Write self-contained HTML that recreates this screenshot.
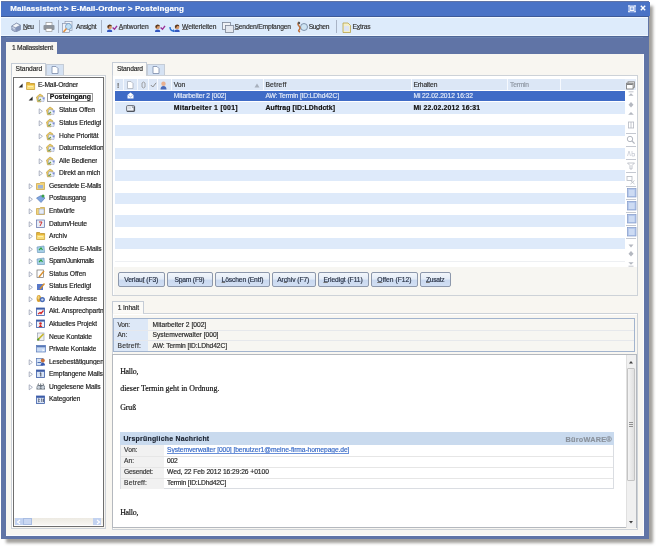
<!DOCTYPE html>
<html><head><meta charset="utf-8">
<style>
*{margin:0;padding:0;box-sizing:border-box}
html,body{width:658px;height:548px;overflow:hidden;background:#fff;font-family:"Liberation Sans",sans-serif;font-size:6.45px;color:#222;position:relative}
.a{position:absolute;display:block}
u{text-decoration-thickness:0.5px;text-underline-offset:0.4px;text-decoration-color:#777}
.t{position:absolute;white-space:nowrap;line-height:1;-webkit-text-stroke:0.18px currentColor}
#w{position:absolute;left:0;top:0;width:658px;height:548px;will-change:transform}
</style></head><body><div id="w">
<div class="a" style="left:6px;top:5.5px;width:647px;height:537.8px;background:rgba(70,66,58,.5);filter:blur(1.6px)"></div>
<div class="a" style="left:1px;top:1px;width:648.4px;height:538.3px;background:#6074A6;"></div>
<div class="a" style="left:1px;top:1.5px;width:648.5px;height:14.2px;background:#4A73C6;"></div>
<div class="t" style="left:10.2px;top:5.13px;font-size:8.0px;font-weight:bold;color:#FFFFFF;letter-spacing:0.105px;">Mailassistent &gt; E-Mail-Ordner &gt; Posteingang</div>
<svg class="a" style="left:627.5px;top:5px;" width="8" height="7.5" viewBox="0 0 8 7.5"><rect x="0" y="0" width="8" height="7.5" rx="1" fill="#93ADE4"/><rect x="2.2" y="2" width="3.6" height="3.5" fill="none" stroke="#fff" stroke-width=".9"/><rect x=".3" y=".3" width="1.3" height="1.3" fill="#fff"/><rect x="6.4" y=".3" width="1.3" height="1.3" fill="#fff"/><rect x=".3" y="5.9" width="1.3" height="1.3" fill="#fff"/><rect x="6.4" y="5.9" width="1.3" height="1.3" fill="#fff"/></svg>
<svg class="a" style="left:639.5px;top:5.3px;" width="6" height="6" viewBox="0 0 6 6"><path d="M.8 .8L5.2 5.2M5.2 .8L.8 5.2" stroke="#fff" stroke-width="1.4"/></svg>
<div class="a" style="left:1px;top:15.5px;width:648px;height:1px;background:#3E5A98;"></div>
<div class="a" style="left:1px;top:16.5px;width:647px;height:19px;background:#DDEBFB;"></div>
<div class="a" style="left:1px;top:16.5px;width:647px;height:1px;background:#F4FAFF;"></div>
<div class="a" style="left:1px;top:34.5px;width:647px;height:1px;background:#F0F7FF;"></div>
<div class="a" style="left:1px;top:35.5px;width:648px;height:1px;background:#4E6696;"></div>
<div class="a" style="left:39.4px;top:19.5px;width:1px;height:13px;background:#A9B4C6;"></div>
<div class="a" style="left:58.2px;top:19.5px;width:1px;height:13px;background:#A9B4C6;"></div>
<div class="a" style="left:101.4px;top:19.5px;width:1px;height:13px;background:#A9B4C6;"></div>
<div class="a" style="left:336px;top:19.5px;width:1px;height:13px;background:#A9B4C6;"></div>
<svg class="a" style="left:10.5px;top:21.8px;" width="10" height="10.5" viewBox="0 0 10 10.5"><path d="M.8 4L5.5 1.2L9.4 3.2L9.4 7.8L4.6 10L.8 8Z" fill="#A8B4D0" stroke="#6A7898" stroke-width=".6"/><path d="M.8 4L5.5 1.2L9.4 3.2L4.6 5.8Z" fill="#F2F5FA" stroke="#6A7898" stroke-width=".5"/><path d="M4.6 5.8L4.6 10L9.4 7.8L9.4 3.2Z" fill="#8494B8"/><path d="M1.5 5.5L3.8 6.8" stroke="#E8F0FA" stroke-width=".8"/></svg>
<svg class="a" style="left:43px;top:21.5px;" width="12" height="10" viewBox="0 0 12 10"><rect x="3" y="0.5" width="6" height="3" fill="#fff" stroke="#888" stroke-width=".6"/><rect x="0.5" y="3" width="11" height="5" rx="1" fill="#8E949C"/><rect x="3" y="6.5" width="6" height="3" fill="#fff" stroke="#888" stroke-width=".6"/></svg>
<svg class="a" style="left:62px;top:20.5px;" width="12" height="12" viewBox="0 0 12 12"><rect x="3" y="0.5" width="7" height="9" fill="#F4F6FA" stroke="#8B97B0" stroke-width=".7"/><rect x="0.5" y="2.5" width="7" height="9" fill="#EEF2F8" stroke="#8B97B0" stroke-width=".7"/><circle cx="6.5" cy="5.5" r="3" fill="#BFE0F4" stroke="#6F93BF" stroke-width=".8"/><path d="M4.5 7.5L1.5 11" stroke="#E09040" stroke-width="1.6"/></svg>
<svg class="a" style="left:106.8px;top:23.5px;" width="11" height="8" viewBox="0 0 11 8"><circle cx="2.6" cy="3" r="2.3" fill="#D89A6A"/><path d="M0.3 3Q0.3 .5 2.6 .5Q4.9 .5 4.9 2.2L2.6 2L1.3 4.5Z" fill="#5A3A20"/><path d="M0 8Q0 5.6 2.6 5.6Q5.2 5.6 5.2 8Z" fill="#3558C0"/><path d="M5.6 3.5L7.5 5.3L10 1.8" stroke="#9A3098" stroke-width="1.4" fill="none"/></svg>
<svg class="a" style="left:155.3px;top:23.5px;" width="11" height="8" viewBox="0 0 11 8"><circle cx="2.6" cy="3" r="2.3" fill="#D89A6A"/><path d="M0.3 3Q0.3 .5 2.6 .5Q4.9 .5 4.9 2.2L2.6 2L1.3 4.5Z" fill="#5A3A20"/><path d="M0 8Q0 5.6 2.6 5.6Q5.2 5.6 5.2 8Z" fill="#3558C0"/><path d="M5.6 3.5L7.5 5.3L10 1.8" stroke="#9A3098" stroke-width="1.4" fill="none"/></svg>
<svg class="a" style="left:169px;top:23.5px;" width="12" height="8" viewBox="0 0 12 8"><path d="M1 3Q1 7 5 7" stroke="#2E6FD0" stroke-width="1.4" fill="none"/><path d="M4 5L6 7L4 9" fill="#2E6FD0"/><circle cx="8.1" cy="3" r="2.3" fill="#D89A6A"/><path d="M5.8 3Q5.8 .5 8.1 .5Q10.4 .5 10.4 2.2L8.1 2L6.8 4.5Z" fill="#5A3A20"/><path d="M5.5 8Q5.5 5.6 8.1 5.6Q10.7 5.6 10.7 8Z" fill="#3558C0"/></svg>
<svg class="a" style="left:222px;top:21.5px;" width="12" height="11" viewBox="0 0 12 11"><rect x="0.5" y="0.5" width="8" height="7" fill="#F0F2F6" stroke="#7D8596" stroke-width=".8"/><rect x="3.5" y="3.5" width="8" height="7" fill="#E4E8EF" stroke="#7D8596" stroke-width=".8"/></svg>
<svg class="a" style="left:296.5px;top:20.5px;" width="12" height="12" viewBox="0 0 12 12"><circle cx="7" cy="6" r="3.5" fill="#CDE3F2" stroke="#6C7F9A" stroke-width=".8"/><path d="M2 1Q0 3 2 5Q4 7 2 9Q1 10 3 11" stroke="#C0703A" stroke-width="1.5" fill="none"/><circle cx="2" cy="2" r="1.2" fill="#555"/></svg>
<svg class="a" style="left:341.5px;top:21.5px;" width="9" height="11" viewBox="0 0 9 11"><path d="M1 1L6 1L8.5 3.5L8.5 10.5L1 10.5Z" fill="#F4EFC8" stroke="#B8A24A" stroke-width=".8"/><rect x="2" y="4" width="5" height="5" fill="#DDE4F4"/></svg>
<div class="t" style="left:22.9px;top:24.43px;font-size:6.7px;color:#333;letter-spacing:-0.591px;"><u>N</u>eu</div>
<div class="t" style="left:76px;top:24.43px;font-size:6.7px;color:#333;letter-spacing:-0.240px;">Ansi<u>c</u>ht</div>
<div class="t" style="left:118.7px;top:24.43px;font-size:6.7px;color:#333;letter-spacing:-0.003px;"><u>A</u>ntworten</div>
<div class="t" style="left:182px;top:24.43px;font-size:6.7px;color:#333;letter-spacing:-0.064px;"><u>W</u>eiterleiten</div>
<div class="t" style="left:234.5px;top:24.43px;font-size:6.7px;color:#333;letter-spacing:-0.175px;"><u>S</u>enden/Empfangen</div>
<div class="t" style="left:308.7px;top:24.43px;font-size:6.7px;color:#333;letter-spacing:-0.398px;">Su<u>c</u>hen</div>
<div class="t" style="left:352.5px;top:24.43px;font-size:6.7px;color:#333;letter-spacing:-0.151px;">E<u>x</u>tras</div>
<div class="a" style="left:6px;top:36.5px;width:637px;height:1px;background:#6A82B0;"></div>
<div class="a" style="left:6px;top:42px;width:51px;height:12.5px;background:#F8F6F1;"></div>
<div class="t" style="left:12px;top:45.33px;font-size:6.7px;color:#2A2A2A;letter-spacing:-0.231px;">1 Mailassistent</div>
<div class="a" style="left:6px;top:54px;width:637.6px;height:481.7px;background:#F8F6F1;box-shadow:inset -1px -1px 0 #FCFDFF"></div>
<div class="a" style="left:11px;top:62.5px;width:34.5px;height:13px;background:#FBFAF7;border:1px solid #C5CCD6;border-bottom:none"></div>
<div class="t" style="left:15.6px;top:65.93px;font-size:6.7px;color:#2A2A2A;letter-spacing:-0.079px;">Standard</div>
<div class="a" style="left:45.5px;top:64px;width:18.5px;height:11.5px;background:#D5E2F3;border:1px solid #C5CCD6;border-bottom:none"></div>
<svg class="a" style="left:50.5px;top:66px;" width="8" height="8" viewBox="0 0 8 8"><path d="M1 .5L5 .5L7 2.5L7 7.5L1 7.5Z" fill="#fff" stroke="#7A8AA8" stroke-width=".8"/></svg>
<div class="a" style="left:11px;top:74.5px;width:94.6px;height:454.8px;background:#F7F5F0;border:1px solid #CDD2D8;box-shadow:inset 1px 1px 0 #fff"></div>
<div class="a" style="left:12px;top:74.3px;width:32.5px;height:1.4px;background:#FBFAF7;"></div>
<div class="a" style="left:13px;top:76.5px;width:90.5px;height:450.5px;background:#FFFFFF;border:1px solid #6E6E6E"></div>
<div class="a" style="left:14px;top:517.8px;width:88.5px;height:7.4px;background:linear-gradient(#EDEAE2,#F8F6F2);"></div>
<div class="a" style="left:14.5px;top:517.8px;width:8px;height:7.2px;background:#C2D2F0;"></div>
<div class="a" style="left:22.5px;top:518.2px;width:9.2px;height:6.8px;background:#C9D7F2;border:1px solid #A9BDE2"></div>
<div class="a" style="left:93.2px;top:517.8px;width:8px;height:7.2px;background:#C2D2F0;"></div>
<svg class="a" style="left:15.5px;top:518.5px;" width="6" height="6" viewBox="0 0 6 6"><path d="M4 1L1.5 3L4 5" stroke="#fff" stroke-width="1.2" fill="none"/></svg>
<svg class="a" style="left:94.5px;top:518.5px;" width="6" height="6" viewBox="0 0 6 6"><path d="M2 1L4.5 3L2 5" stroke="#fff" stroke-width="1.2" fill="none"/></svg>
<svg class="a" style="left:18px;top:83.0px;" width="6" height="6" viewBox="0 0 6 6"><path d="M4.6 0.6L4.6 4.6L0.6 4.6Z" fill="#2A2A2A"/></svg>
<svg class="a" style="left:26px;top:80.5px;" width="10" height="10" viewBox="0 0 10 10"><path d="M.6 1.5L3.6 1.5L4.6 2.5L8.6 2.5L8.6 8.4L.6 8.4Z" fill="#E8B838" stroke="#B88A20" stroke-width=".7"/><path d="M.8 4.2L8.4 4.2L8.4 8.2L.8 8.2Z" fill="#F8DC78"/><path d="M2 5.5L7 5.5" stroke="#FFF4C0" stroke-width=".8"/></svg>
<div class="t" style="left:38px;top:82.33px;font-size:6.7px;color:#1E1E1E;letter-spacing:-0.142px;max-width:65.0px;overflow:hidden">E-Mail-Ordner</div>
<svg class="a" style="left:28px;top:95.564px;" width="6" height="6" viewBox="0 0 6 6"><path d="M4.6 0.6L4.6 4.6L0.6 4.6Z" fill="#2A2A2A"/></svg>
<svg class="a" style="left:36px;top:93.064px;" width="10" height="10" viewBox="0 0 10 10"><path d="M.5 4L4 1L7 3L5 8.8L1.5 8.8Z" fill="#ECCB60" stroke="#B8963A" stroke-width=".6"/><path d="M3 3.5L8.6 4.5L7.8 8.5L2.2 7.5Z" fill="#F4F6FC" stroke="#8C9CC8" stroke-width=".6"/><path d="M2.5 8L5 6" stroke="#6A9A40" stroke-width="1.1"/><circle cx="7.5" cy="5.5" r="1" fill="#7C90D8"/></svg>
<div class="a" style="left:47.3px;top:93.2px;width:45.4px;height:8.8px;background:#fff;border:1px solid #9A9A9A"></div>
<div class="t" style="left:49.8px;top:94.46px;font-size:6.9px;font-weight:bold;color:#111;letter-spacing:-0.016px;">Posteingang</div>
<svg class="a" style="left:38px;top:107.628px;" width="6" height="7" viewBox="0 0 6 7"><path d="M1.2 .8L4.4 3.3L1.2 5.8Z" fill="#fff" stroke="#98A0B4" stroke-width=".8"/></svg>
<svg class="a" style="left:46px;top:105.628px;" width="10" height="10" viewBox="0 0 10 10"><path d="M.5 4L4 1L7 3L5 8.8L1.5 8.8Z" fill="#ECCB60" stroke="#B8963A" stroke-width=".6"/><path d="M3 3.5L8.6 4.5L7.8 8.5L2.2 7.5Z" fill="#F4F6FC" stroke="#8C9CC8" stroke-width=".6"/><path d="M2.5 8L5 6" stroke="#6A9A40" stroke-width="1.1"/><circle cx="7.5" cy="5.5" r="1" fill="#7C90D8"/></svg>
<div class="t" style="left:59px;top:107.46px;font-size:6.7px;color:#1E1E1E;letter-spacing:-0.1px;max-width:44.0px;overflow:hidden">Status Offen</div>
<svg class="a" style="left:38px;top:120.19200000000001px;" width="6" height="7" viewBox="0 0 6 7"><path d="M1.2 .8L4.4 3.3L1.2 5.8Z" fill="#fff" stroke="#98A0B4" stroke-width=".8"/></svg>
<svg class="a" style="left:46px;top:118.19200000000001px;" width="10" height="10" viewBox="0 0 10 10"><path d="M.5 4L4 1L7 3L5 8.8L1.5 8.8Z" fill="#ECCB60" stroke="#B8963A" stroke-width=".6"/><path d="M3 3.5L8.6 4.5L7.8 8.5L2.2 7.5Z" fill="#F4F6FC" stroke="#8C9CC8" stroke-width=".6"/><path d="M2.5 8L5 6" stroke="#6A9A40" stroke-width="1.1"/><circle cx="7.5" cy="5.5" r="1" fill="#7C90D8"/></svg>
<div class="t" style="left:59px;top:120.02px;font-size:6.7px;color:#1E1E1E;letter-spacing:-0.079px;max-width:44.0px;overflow:hidden">Status Erledigt</div>
<svg class="a" style="left:38px;top:132.756px;" width="6" height="7" viewBox="0 0 6 7"><path d="M1.2 .8L4.4 3.3L1.2 5.8Z" fill="#fff" stroke="#98A0B4" stroke-width=".8"/></svg>
<svg class="a" style="left:46px;top:130.756px;" width="10" height="10" viewBox="0 0 10 10"><path d="M.5 4L4 1L7 3L5 8.8L1.5 8.8Z" fill="#ECCB60" stroke="#B8963A" stroke-width=".6"/><path d="M3 3.5L8.6 4.5L7.8 8.5L2.2 7.5Z" fill="#F4F6FC" stroke="#8C9CC8" stroke-width=".6"/><path d="M2.5 8L5 6" stroke="#6A9A40" stroke-width="1.1"/><circle cx="7.5" cy="5.5" r="1" fill="#7C90D8"/></svg>
<div class="t" style="left:59px;top:132.58px;font-size:6.7px;color:#1E1E1E;letter-spacing:-0.1px;max-width:44.0px;overflow:hidden">Hohe Priorität</div>
<svg class="a" style="left:38px;top:145.32px;" width="6" height="7" viewBox="0 0 6 7"><path d="M1.2 .8L4.4 3.3L1.2 5.8Z" fill="#fff" stroke="#98A0B4" stroke-width=".8"/></svg>
<svg class="a" style="left:46px;top:143.32px;" width="10" height="10" viewBox="0 0 10 10"><path d="M.5 4L4 1L7 3L5 8.8L1.5 8.8Z" fill="#ECCB60" stroke="#B8963A" stroke-width=".6"/><path d="M3 3.5L8.6 4.5L7.8 8.5L2.2 7.5Z" fill="#F4F6FC" stroke="#8C9CC8" stroke-width=".6"/><path d="M2.5 8L5 6" stroke="#6A9A40" stroke-width="1.1"/><circle cx="7.5" cy="5.5" r="1" fill="#7C90D8"/></svg>
<div class="t" style="left:59px;top:145.15px;font-size:6.7px;color:#1E1E1E;letter-spacing:-0.1px;max-width:44.0px;overflow:hidden">Datumselektion</div>
<svg class="a" style="left:38px;top:157.88400000000001px;" width="6" height="7" viewBox="0 0 6 7"><path d="M1.2 .8L4.4 3.3L1.2 5.8Z" fill="#fff" stroke="#98A0B4" stroke-width=".8"/></svg>
<svg class="a" style="left:46px;top:155.88400000000001px;" width="10" height="10" viewBox="0 0 10 10"><path d="M.5 4L4 1L7 3L5 8.8L1.5 8.8Z" fill="#ECCB60" stroke="#B8963A" stroke-width=".6"/><path d="M3 3.5L8.6 4.5L7.8 8.5L2.2 7.5Z" fill="#F4F6FC" stroke="#8C9CC8" stroke-width=".6"/><path d="M2.5 8L5 6" stroke="#6A9A40" stroke-width="1.1"/><circle cx="7.5" cy="5.5" r="1" fill="#7C90D8"/></svg>
<div class="t" style="left:59px;top:157.71px;font-size:6.7px;color:#1E1E1E;letter-spacing:-0.1px;max-width:44.0px;overflow:hidden">Alle Bediener</div>
<svg class="a" style="left:38px;top:170.448px;" width="6" height="7" viewBox="0 0 6 7"><path d="M1.2 .8L4.4 3.3L1.2 5.8Z" fill="#fff" stroke="#98A0B4" stroke-width=".8"/></svg>
<svg class="a" style="left:46px;top:168.448px;" width="10" height="10" viewBox="0 0 10 10"><path d="M.5 4L4 1L7 3L5 8.8L1.5 8.8Z" fill="#ECCB60" stroke="#B8963A" stroke-width=".6"/><path d="M3 3.5L8.6 4.5L7.8 8.5L2.2 7.5Z" fill="#F4F6FC" stroke="#8C9CC8" stroke-width=".6"/><path d="M2.5 8L5 6" stroke="#6A9A40" stroke-width="1.1"/><circle cx="7.5" cy="5.5" r="1" fill="#7C90D8"/></svg>
<div class="t" style="left:59px;top:170.28px;font-size:6.7px;color:#1E1E1E;letter-spacing:-0.1px;max-width:44.0px;overflow:hidden">Direkt an mich</div>
<svg class="a" style="left:28px;top:183.012px;" width="6" height="7" viewBox="0 0 6 7"><path d="M1.2 .8L4.4 3.3L1.2 5.8Z" fill="#fff" stroke="#98A0B4" stroke-width=".8"/></svg>
<svg class="a" style="left:36px;top:181.012px;" width="10" height="10" viewBox="0 0 10 10"><path d="M.5 2.5L3.5 2.5L4.5 1.5L8.5 1.5L8.5 8.5L.5 8.5Z" fill="#F2D47A" stroke="#C9A040" stroke-width=".7"/><rect x="2" y="4" width="5" height="3.5" fill="#9DB4D8"/></svg>
<div class="t" style="left:49px;top:182.84px;font-size:6.7px;color:#1E1E1E;letter-spacing:-0.273px;max-width:54.0px;overflow:hidden">Gesendete E-Mails</div>
<svg class="a" style="left:28px;top:195.576px;" width="6" height="7" viewBox="0 0 6 7"><path d="M1.2 .8L4.4 3.3L1.2 5.8Z" fill="#fff" stroke="#98A0B4" stroke-width=".8"/></svg>
<svg class="a" style="left:36px;top:193.576px;" width="10" height="10" viewBox="0 0 10 10"><path d="M.5 4L5 1.5L9 4L5 8.5Z" fill="#7FA6E0" stroke="#4E72B0" stroke-width=".6"/><circle cx="7" cy="2" r="1.5" fill="#3BA04A"/></svg>
<div class="t" style="left:49px;top:195.40px;font-size:6.7px;color:#1E1E1E;letter-spacing:-0.195px;max-width:54.0px;overflow:hidden">Postausgang</div>
<svg class="a" style="left:28px;top:208.14px;" width="6" height="7" viewBox="0 0 6 7"><path d="M1.2 .8L4.4 3.3L1.2 5.8Z" fill="#fff" stroke="#98A0B4" stroke-width=".8"/></svg>
<svg class="a" style="left:36px;top:206.14px;" width="10" height="10" viewBox="0 0 10 10"><path d="M.5 2.5L3.5 2.5L4.5 1.5L8.5 1.5L8.5 8.5L.5 8.5Z" fill="#F2D47A" stroke="#C9A040" stroke-width=".7"/><rect x="3" y="3" width="5" height="5" fill="#E6ECF8" stroke="#8898B8" stroke-width=".5"/></svg>
<div class="t" style="left:49px;top:207.97px;font-size:6.7px;color:#1E1E1E;letter-spacing:-0.1px;max-width:54.0px;overflow:hidden">Entwürfe</div>
<svg class="a" style="left:28px;top:220.704px;" width="6" height="7" viewBox="0 0 6 7"><path d="M1.2 .8L4.4 3.3L1.2 5.8Z" fill="#fff" stroke="#98A0B4" stroke-width=".8"/></svg>
<svg class="a" style="left:36px;top:218.704px;" width="10" height="10" viewBox="0 0 10 10"><rect x=".5" y="1" width="8" height="7.5" fill="#E8EEF8" stroke="#5A6EA8" stroke-width=".7"/><path d="M3 3L6 3L4 7" stroke="#D03030" stroke-width="1" fill="none"/></svg>
<div class="t" style="left:49px;top:220.53px;font-size:6.7px;color:#1E1E1E;letter-spacing:-0.141px;max-width:54.0px;overflow:hidden">Datum/Heute</div>
<svg class="a" style="left:28px;top:233.268px;" width="6" height="7" viewBox="0 0 6 7"><path d="M1.2 .8L4.4 3.3L1.2 5.8Z" fill="#fff" stroke="#98A0B4" stroke-width=".8"/></svg>
<svg class="a" style="left:36px;top:231.268px;" width="10" height="10" viewBox="0 0 10 10"><path d="M.6 1.5L3.6 1.5L4.6 2.5L8.6 2.5L8.6 8.4L.6 8.4Z" fill="#E8B838" stroke="#B88A20" stroke-width=".7"/><path d="M.8 4.2L8.4 4.2L8.4 8.2L.8 8.2Z" fill="#F8DC78"/><path d="M2 5.5L7 5.5" stroke="#FFF4C0" stroke-width=".8"/></svg>
<div class="t" style="left:49px;top:233.10px;font-size:6.7px;color:#1E1E1E;letter-spacing:-0.059px;max-width:54.0px;overflow:hidden">Archiv</div>
<svg class="a" style="left:28px;top:245.832px;" width="6" height="7" viewBox="0 0 6 7"><path d="M1.2 .8L4.4 3.3L1.2 5.8Z" fill="#fff" stroke="#98A0B4" stroke-width=".8"/></svg>
<svg class="a" style="left:36px;top:243.832px;" width="10" height="10" viewBox="0 0 10 10"><path d="M1 3L8 2L8.5 8.5L1.5 8.5Z" fill="#A8D0E8" stroke="#5E8EB4" stroke-width=".6"/><path d="M3 6L5 4L6.5 6" stroke="#2EA040" stroke-width="1.2" fill="none"/></svg>
<div class="t" style="left:49px;top:245.66px;font-size:6.7px;color:#1E1E1E;letter-spacing:-0.1px;max-width:54.0px;overflow:hidden">Gelöschte E-Mails</div>
<svg class="a" style="left:28px;top:258.396px;" width="6" height="7" viewBox="0 0 6 7"><path d="M1.2 .8L4.4 3.3L1.2 5.8Z" fill="#fff" stroke="#98A0B4" stroke-width=".8"/></svg>
<svg class="a" style="left:36px;top:256.396px;" width="10" height="10" viewBox="0 0 10 10"><path d="M1 3L8 2L8.5 8.5L1.5 8.5Z" fill="#A8D0E8" stroke="#5E8EB4" stroke-width=".6"/><path d="M3 6L5 4L6.5 6" stroke="#2EA040" stroke-width="1.2" fill="none"/></svg>
<div class="t" style="left:49px;top:258.22px;font-size:6.7px;color:#1E1E1E;letter-spacing:-0.297px;max-width:54.0px;overflow:hidden">Spam/Junkmails</div>
<svg class="a" style="left:28px;top:270.96000000000004px;" width="6" height="7" viewBox="0 0 6 7"><path d="M1.2 .8L4.4 3.3L1.2 5.8Z" fill="#fff" stroke="#98A0B4" stroke-width=".8"/></svg>
<svg class="a" style="left:36px;top:268.96000000000004px;" width="10" height="10" viewBox="0 0 10 10"><rect x="1" y="1" width="6.5" height="7.5" fill="#fff" stroke="#707070" stroke-width=".7"/><path d="M3 8L8 2" stroke="#D89030" stroke-width="1.4"/></svg>
<div class="t" style="left:49px;top:270.79px;font-size:6.7px;color:#1E1E1E;letter-spacing:0.003px;max-width:54.0px;overflow:hidden">Status Offen</div>
<svg class="a" style="left:28px;top:283.524px;" width="6" height="7" viewBox="0 0 6 7"><path d="M1.2 .8L4.4 3.3L1.2 5.8Z" fill="#fff" stroke="#98A0B4" stroke-width=".8"/></svg>
<svg class="a" style="left:36px;top:281.524px;" width="10" height="10" viewBox="0 0 10 10"><rect x="1" y="2" width="6" height="6" fill="#5878C8"/><path d="M4 7L8.5 1.5" stroke="#D89030" stroke-width="1.4"/></svg>
<div class="t" style="left:49px;top:283.35px;font-size:6.7px;color:#1E1E1E;letter-spacing:-0.079px;max-width:54.0px;overflow:hidden">Status Erledigt</div>
<svg class="a" style="left:28px;top:296.08799999999997px;" width="6" height="7" viewBox="0 0 6 7"><path d="M1.2 .8L4.4 3.3L1.2 5.8Z" fill="#fff" stroke="#98A0B4" stroke-width=".8"/></svg>
<svg class="a" style="left:36px;top:294.08799999999997px;" width="10" height="10" viewBox="0 0 10 10"><ellipse cx="2.8" cy="4.5" rx="2.2" ry="3.6" fill="#D8A030"/><ellipse cx="2.5" cy="3.5" rx="1" ry="2" fill="#F4D27A"/><circle cx="6.3" cy="5.6" r="2.6" fill="#4A6CB8"/><circle cx="6.3" cy="5.6" r="1.2" fill="#C8D8F4"/></svg>
<div class="t" style="left:49px;top:295.92px;font-size:6.7px;color:#1E1E1E;letter-spacing:-0.1px;max-width:54.0px;overflow:hidden">Aktuelle Adresse</div>
<svg class="a" style="left:28px;top:308.652px;" width="6" height="7" viewBox="0 0 6 7"><path d="M1.2 .8L4.4 3.3L1.2 5.8Z" fill="#fff" stroke="#98A0B4" stroke-width=".8"/></svg>
<svg class="a" style="left:36px;top:306.652px;" width="10" height="10" viewBox="0 0 10 10"><rect x=".5" y="1" width="8" height="7.5" fill="#F0F4FC" stroke="#3C5CA8" stroke-width=".8"/><rect x=".5" y="1" width="8" height="1.6" fill="#3C5CA8"/><path d="M2 7L4 5.5L5 6.5L7.5 3.5" stroke="#D82828" stroke-width="1.2" fill="none"/></svg>
<div class="t" style="left:49px;top:308.48px;font-size:6.7px;color:#1E1E1E;letter-spacing:-0.1px;max-width:54.0px;overflow:hidden">Akt. Ansprechpartner</div>
<svg class="a" style="left:28px;top:321.216px;" width="6" height="7" viewBox="0 0 6 7"><path d="M1.2 .8L4.4 3.3L1.2 5.8Z" fill="#fff" stroke="#98A0B4" stroke-width=".8"/></svg>
<svg class="a" style="left:36px;top:319.216px;" width="10" height="10" viewBox="0 0 10 10"><rect x=".5" y="1" width="8" height="7.5" fill="#F0F4FC" stroke="#3C5CA8" stroke-width=".8"/><rect x=".5" y="1" width="8" height="1.6" fill="#3C5CA8"/><circle cx="4.5" cy="4.5" r="1.3" fill="#D02828"/><path d="M2.5 8L4.5 5.5L6.5 8Z" fill="#D02828"/></svg>
<div class="t" style="left:49px;top:321.04px;font-size:6.7px;color:#1E1E1E;letter-spacing:-0.1px;max-width:54.0px;overflow:hidden">Aktuelles Projekt</div>
<svg class="a" style="left:36px;top:331.78px;" width="10" height="10" viewBox="0 0 10 10"><rect x="1.5" y="1" width="6.5" height="7.5" fill="#EEF0F4" stroke="#8890A0" stroke-width=".6"/><path d="M1.5 8.2L7.5 2" stroke="#C8B830" stroke-width="1.7"/><path d="M1.5 8.2L3 6.7" stroke="#58A038" stroke-width="1.7"/></svg>
<div class="t" style="left:49px;top:333.61px;font-size:6.7px;color:#1E1E1E;letter-spacing:-0.1px;max-width:54.0px;overflow:hidden">Neue Kontakte</div>
<svg class="a" style="left:36px;top:344.344px;" width="10" height="10" viewBox="0 0 10 10"><rect x=".5" y="1.5" width="9" height="6.5" fill="#C8DAF4" stroke="#5878B8" stroke-width=".7"/><rect x=".5" y="1.5" width="9" height="1.8" fill="#5878B8"/><path d="M6.5 5L8.5 6.2L6.5 7.4Z" fill="#fff"/></svg>
<div class="t" style="left:49px;top:346.17px;font-size:6.7px;color:#1E1E1E;letter-spacing:-0.1px;max-width:54.0px;overflow:hidden">Private Kontakte</div>
<svg class="a" style="left:28px;top:358.908px;" width="6" height="7" viewBox="0 0 6 7"><path d="M1.2 .8L4.4 3.3L1.2 5.8Z" fill="#fff" stroke="#98A0B4" stroke-width=".8"/></svg>
<svg class="a" style="left:36px;top:356.908px;" width="10" height="10" viewBox="0 0 10 10"><rect x=".5" y="1.5" width="6.5" height="7" fill="#D4E2F6" stroke="#5070B0" stroke-width=".7"/><rect x="1.5" y="5" width="4" height="1" fill="#5070B0"/><circle cx="6.8" cy="3.6" r="2" fill="#C87038"/><path d="M4.6 8.5Q4.6 5.8 6.8 5.8Q9 5.8 9 8.5Z" fill="#3A5AB0"/></svg>
<div class="t" style="left:49px;top:358.74px;font-size:6.7px;color:#1E1E1E;letter-spacing:-0.1px;max-width:54.0px;overflow:hidden">Lesebestätigungen</div>
<svg class="a" style="left:28px;top:371.472px;" width="6" height="7" viewBox="0 0 6 7"><path d="M1.2 .8L4.4 3.3L1.2 5.8Z" fill="#fff" stroke="#98A0B4" stroke-width=".8"/></svg>
<svg class="a" style="left:36px;top:369.472px;" width="10" height="10" viewBox="0 0 10 10"><rect x=".5" y="1" width="8" height="7.5" fill="#D8E4F6" stroke="#3C5CA8" stroke-width=".8"/><rect x=".5" y="1" width="8" height="1.8" fill="#3C5CA8"/><path d="M3.8 4.2L4.8 3.8L4.8 7.5" stroke="#303850" stroke-width=".9" fill="none"/></svg>
<div class="t" style="left:49px;top:371.30px;font-size:6.7px;color:#1E1E1E;letter-spacing:-0.1px;max-width:54.0px;overflow:hidden">Empfangene Mails</div>
<svg class="a" style="left:28px;top:384.036px;" width="6" height="7" viewBox="0 0 6 7"><path d="M1.2 .8L4.4 3.3L1.2 5.8Z" fill="#fff" stroke="#98A0B4" stroke-width=".8"/></svg>
<svg class="a" style="left:36px;top:382.036px;" width="10" height="10" viewBox="0 0 10 10"><path d="M.5 6Q.5 3 2.5 3L7 3Q9 3 9 6L9 7.5L.5 7.5Z" fill="#6A747E"/><circle cx="2.7" cy="5.3" r="1.6" fill="#C8D0DA"/><circle cx="6.8" cy="5.3" r="1.6" fill="#C8D0DA"/><path d="M2 3L2.5 1.5M4.7 3L4.7 1.5M7.5 3L7 1.5" stroke="#4A525A" stroke-width=".8"/></svg>
<div class="t" style="left:49px;top:383.86px;font-size:6.7px;color:#1E1E1E;letter-spacing:-0.1px;max-width:54.0px;overflow:hidden">Ungelesene Mails</div>
<svg class="a" style="left:36px;top:394.6px;" width="10" height="10" viewBox="0 0 10 10"><rect x=".5" y="1" width="8" height="7.5" fill="#D8E4F6" stroke="#3C5CA8" stroke-width=".8"/><rect x=".5" y="1" width="8" height="1.8" fill="#3C5CA8"/><path d="M2 4L3.3 4L2.6 5.3L3.3 6.5L2 6.8M5 4.2L5.8 3.9L5.8 7M7 4.2L7.5 3.9L7.5 7" stroke="#303850" stroke-width=".7" fill="none"/></svg>
<div class="t" style="left:49px;top:396.43px;font-size:6.7px;color:#1E1E1E;letter-spacing:-0.1px;max-width:54.0px;overflow:hidden">Kategorien</div>
<div class="a" style="left:111.6px;top:62.3px;width:35px;height:12.5px;background:#FBFAF7;border:1px solid #C5CCD6;border-bottom:none"></div>
<div class="t" style="left:117px;top:66.33px;font-size:6.7px;color:#2A2A2A;letter-spacing:-0.151px;">Standard</div>
<div class="a" style="left:146.5px;top:64px;width:18px;height:10.8px;background:#D5E2F3;border:1px solid #C5CCD6;border-bottom:none"></div>
<svg class="a" style="left:151.5px;top:66px;" width="8" height="8" viewBox="0 0 8 8"><path d="M1 .5L5 .5L7 2.5L7 7.5L1 7.5Z" fill="#fff" stroke="#7A8AA8" stroke-width=".8"/></svg>
<div class="a" style="left:111.6px;top:74.5px;width:526px;height:221px;background:#F7F6F2;border:1px solid #CDD2D8;box-shadow:inset 1px 1px 0 #fff"></div>
<div class="a" style="left:112.6px;top:75.5px;width:524px;height:191.5px;background:#FFFFFF;"></div>
<div class="a" style="left:112.6px;top:74.3px;width:33.9px;height:1.4px;background:#FBFAF7;"></div>
<div class="a" style="left:115.2px;top:79.0px;width:510px;height:11.2px;background:#DCE7F6;"></div>
<div class="a" style="left:122.6px;top:79.0px;width:1px;height:11.2px;background:#F6F9FE;"></div>
<div class="a" style="left:137px;top:79.0px;width:1px;height:11.2px;background:#F6F9FE;"></div>
<div class="a" style="left:147.5px;top:79.0px;width:1px;height:11.2px;background:#F6F9FE;"></div>
<div class="a" style="left:157px;top:79.0px;width:1px;height:11.2px;background:#F6F9FE;"></div>
<div class="a" style="left:170.5px;top:79.0px;width:1px;height:11.2px;background:#F6F9FE;"></div>
<div class="a" style="left:262.8px;top:79.0px;width:1px;height:11.2px;background:#F6F9FE;"></div>
<div class="a" style="left:411.3px;top:79.0px;width:1px;height:11.2px;background:#F6F9FE;"></div>
<div class="a" style="left:507px;top:79.0px;width:1px;height:11.2px;background:#F6F9FE;"></div>
<div class="a" style="left:560.3px;top:79.0px;width:1px;height:11.2px;background:#F6F9FE;"></div>
<div class="t" style="left:117px;top:82.07px;font-size:7px;font-weight:bold;color:#707070;">!</div>
<svg class="a" style="left:126.5px;top:81px;" width="7" height="8" viewBox="0 0 7 8"><path d="M.5 .5L4 .5L6 2.5L6 7.5L.5 7.5Z" fill="#fff" stroke="#A0A8B4" stroke-width=".7"/></svg>
<svg class="a" style="left:140.5px;top:81px;" width="5" height="8" viewBox="0 0 5 8"><path d="M1 6L1 2Q2.5 0 4 2L4 6Q2.5 8 1 6" fill="none" stroke="#909090" stroke-width=".8"/></svg>
<svg class="a" style="left:149.5px;top:82px;" width="7" height="6" viewBox="0 0 7 6"><path d="M.8 3L2.8 5L6.2 .8" fill="none" stroke="#8A8A8A" stroke-width="1"/></svg>
<svg class="a" style="left:160px;top:80.5px;" width="7" height="9" viewBox="0 0 7 9"><circle cx="3.5" cy="2.8" r="2.2" fill="#E8B090"/><path d="M.5 8.5Q.5 5 3.5 5Q6.5 5 6.5 8.5Z" fill="#4A6AB8"/></svg>
<div class="t" style="left:173.7px;top:82.03px;font-size:6.7px;color:#333;letter-spacing:-0.016px;">Von</div>
<svg class="a" style="left:253.5px;top:82.5px;" width="6" height="5" viewBox="0 0 6 5"><path d="M3 .5L5.5 4.5L.5 4.5Z" fill="#A8B0BC"/></svg>
<div class="t" style="left:265.4px;top:82.03px;font-size:6.7px;color:#333;letter-spacing:0.234px;">Betreff</div>
<div class="t" style="left:413.4px;top:82.03px;font-size:6.7px;color:#333;letter-spacing:-0.132px;">Erhalten</div>
<div class="t" style="left:510px;top:82.03px;font-size:6.7px;color:#9098A4;letter-spacing:-0.216px;">Termin</div>
<div class="a" style="left:115.2px;top:90.9px;width:510px;height:10.1px;background:#3F6BC6;"></div>
<div class="a" style="left:115.2px;top:102.31px;width:510px;height:11.31px;background:#DEEAFA;"></div>
<div class="a" style="left:115.2px;top:124.93px;width:510px;height:11.31px;background:#DEEAFA;"></div>
<div class="a" style="left:115.2px;top:147.55px;width:510px;height:11.31px;background:#DEEAFA;"></div>
<div class="a" style="left:115.2px;top:170.17000000000002px;width:510px;height:11.31px;background:#DEEAFA;"></div>
<div class="a" style="left:115.2px;top:192.79000000000002px;width:510px;height:11.31px;background:#DEEAFA;"></div>
<div class="a" style="left:115.2px;top:215.41000000000003px;width:510px;height:11.31px;background:#DEEAFA;"></div>
<div class="a" style="left:115.2px;top:238.03px;width:510px;height:11.31px;background:#DEEAFA;"></div>
<div class="a" style="left:115.2px;top:260.8px;width:510px;height:0.6px;background:#EEF0F3;"></div>
<svg class="a" style="left:126.8px;top:92.3px;" width="7" height="7" viewBox="0 0 7 7"><path d="M.5 3L3.5 .5L6.5 3L6.5 6.5L.5 6.5Z" fill="#fff"/><path d="M1.5 3.5L3.5 5L5.5 3.5" stroke="#7E9AD8" stroke-width=".7" fill="none"/></svg>
<div class="t" style="left:173.7px;top:93.43px;font-size:6.7px;color:#E4EBF8;letter-spacing:-0.067px;">Mitarbeiter 2 [002]</div>
<div class="t" style="left:265.4px;top:93.43px;font-size:6.7px;color:#E4EBF8;letter-spacing:-0.129px;">AW: Termin [ID:LDhd42C]</div>
<div class="t" style="left:413.4px;top:93.43px;font-size:6.7px;color:#E4EBF8;letter-spacing:-0.077px;">Mi 22.02.2012 16:32</div>
<svg class="a" style="left:126.2px;top:104.5px;" width="9.5" height="7.5" viewBox="0 0 9.5 7.5"><rect x=".6" y=".6" width="8" height="6" rx="1" fill="#EEF1F6" stroke="#5A606C" stroke-width=".9"/><path d="M1 6.2L8.2 6.2L8.2 1.5" stroke="#3E434C" stroke-width="1" fill="none"/><path d="M2 3L5 3" stroke="#B8C0CC" stroke-width=".7"/><rect x="6" y="1.5" width="1.5" height="1.2" fill="#7A8290"/></svg>
<div class="t" style="left:173.7px;top:104.56px;font-size:6.9px;font-weight:bold;color:#111;letter-spacing:0.273px;">Mitarbeiter 1 [001]</div>
<div class="t" style="left:265.4px;top:104.56px;font-size:6.9px;font-weight:bold;color:#111;letter-spacing:0.097px;">Auftrag [ID:LDhdctk]</div>
<div class="t" style="left:413.4px;top:104.56px;font-size:6.9px;font-weight:bold;color:#111;letter-spacing:0.167px;">Mi 22.02.2012 16:31</div>
<div class="a" style="left:625.2px;top:79.0px;width:11px;height:11.2px;background:#E4ECF8;"></div>
<svg class="a" style="left:626px;top:80.5px;" width="10" height="10" viewBox="0 0 10 10"><rect x="2" y=".8" width="6.5" height="5.5" fill="#F4F4F4" stroke="#808080" stroke-width=".8"/><rect x=".6" y="2.2" width="6.5" height="5.8" fill="#fff" stroke="#707070" stroke-width=".8"/><rect x="1" y="2.6" width="5.8" height="1.4" fill="#808080"/></svg>
<svg class="a" style="left:626px;top:90px;" width="10" height="10" viewBox="0 0 10 10"><path d="M2.5 1.8L7.5 1.8" stroke="#B4B8C0" stroke-width=".8"/><path d="M5 3.2L7.6 5.8L2.4 5.8Z" fill="#B4B8C0"/></svg>
<svg class="a" style="left:626px;top:99.5px;" width="10" height="10" viewBox="0 0 10 10"><path d="M5 2L7.5 4.8L5 7.6L2.5 4.8Z" fill="#B4B8C0"/></svg>
<svg class="a" style="left:626px;top:109px;" width="10" height="10" viewBox="0 0 10 10"><path d="M5 3L7.8 5.8L2.2 5.8Z" fill="#B4B8C0"/></svg>
<svg class="a" style="left:626px;top:120px;" width="10" height="10" viewBox="0 0 10 10"><path d="M2.5 2L2.5 8M5 2L5 8M7.5 2L7.5 8M2 2L8 2M2 8L8 8" stroke="#B4B8C0" stroke-width=".8" fill="none"/></svg>
<div class="a" style="left:626px;top:132.5px;width:10px;height:0.7px;background:#C4C8D0;"></div>
<svg class="a" style="left:626px;top:135px;" width="10" height="10" viewBox="0 0 10 10"><circle cx="4" cy="4" r="2.7" fill="none" stroke="#B4B8C0" stroke-width="1"/><path d="M5.8 5.8L8.6 8.6" stroke="#B4B8C0" stroke-width="1.3"/></svg>
<div class="a" style="left:626px;top:145.5px;width:10px;height:0.7px;background:#C4C8D0;"></div>
<svg class="a" style="left:626px;top:148px;" width="10" height="10" viewBox="0 0 10 10"><path d="M1.5 8L3 3L4.5 8M6 3L6 8L8.5 8L8.5 5.5L6 5.5" stroke="#C8CCD4" stroke-width=".8" fill="none"/></svg>
<div class="a" style="left:626px;top:159px;width:10px;height:0.7px;background:#C4C8D0;"></div>
<svg class="a" style="left:626px;top:161px;" width="10" height="10" viewBox="0 0 10 10"><path d="M1.5 2L8.5 2L6 4.5L6 8L4 8L4 4.5Z" fill="none" stroke="#B4B8C0" stroke-width=".8"/></svg>
<div class="a" style="left:626px;top:172px;width:10px;height:0.7px;background:#C4C8D0;"></div>
<svg class="a" style="left:626px;top:175px;" width="10" height="10" viewBox="0 0 10 10"><rect x="1" y="1.5" width="5" height="4" fill="none" stroke="#B4B8C0" stroke-width=".8"/><path d="M4.5 5.5L8.5 9M8.5 5.5L4.5 9" stroke="#B4B8C0" stroke-width=".8"/></svg>
<div class="a" style="left:626px;top:186px;width:10px;height:0.7px;background:#C4C8D0;"></div>
<svg class="a" style="left:626.5px;top:188px;" width="10" height="9.5" viewBox="0 0 10 9.5"><rect x=".5" y=".5" width="8.5" height="8.5" fill="#B4C8EC" stroke="#8098C8" stroke-width=".7"/><path d="M2 3L7.5 3M2 5L7.5 5M2 7L7.5 7" stroke="#F4F8FF" stroke-width=".8"/></svg>
<div class="a" style="left:626px;top:199px;width:10px;height:0.7px;background:#C4C8D0;"></div>
<svg class="a" style="left:626.5px;top:201px;" width="10" height="9.5" viewBox="0 0 10 9.5"><rect x=".5" y=".5" width="8.5" height="8.5" fill="#B4C8EC" stroke="#8098C8" stroke-width=".7"/><path d="M2 3L7.5 3M2 5L7.5 5M2 7L7.5 7" stroke="#F4F8FF" stroke-width=".8"/></svg>
<div class="a" style="left:626px;top:212px;width:10px;height:0.7px;background:#C4C8D0;"></div>
<svg class="a" style="left:626.5px;top:214px;" width="10" height="9.5" viewBox="0 0 10 9.5"><rect x=".5" y=".5" width="8.5" height="8.5" fill="#B4C8EC" stroke="#8098C8" stroke-width=".7"/><path d="M2 3L7.5 3M2 5L7.5 5M2 7L7.5 7" stroke="#F4F8FF" stroke-width=".8"/></svg>
<div class="a" style="left:626px;top:225px;width:10px;height:0.7px;background:#C4C8D0;"></div>
<svg class="a" style="left:626.5px;top:227px;" width="10" height="9.5" viewBox="0 0 10 9.5"><rect x=".5" y=".5" width="8.5" height="8.5" fill="#B4C8EC" stroke="#8098C8" stroke-width=".7"/><path d="M2 3L7.5 3M2 5L7.5 5M2 7L7.5 7" stroke="#F4F8FF" stroke-width=".8"/></svg>
<div class="a" style="left:626px;top:238px;width:10px;height:0.7px;background:#C4C8D0;"></div>
<svg class="a" style="left:626px;top:241px;" width="10" height="10" viewBox="0 0 10 10"><path d="M2.5 3.5L7.5 3.5L5 6.5Z" fill="#B4B8C0"/></svg>
<svg class="a" style="left:626px;top:249px;" width="10" height="10" viewBox="0 0 10 10"><path d="M5 2L7.5 4.8L5 7.6L2.5 4.8Z" fill="#B4B8C0"/></svg>
<svg class="a" style="left:626px;top:258px;" width="10" height="10" viewBox="0 0 10 10"><path d="M2.5 8.2L7.5 8.2" stroke="#B4B8C0" stroke-width=".8"/><path d="M5 6.8L2.4 4.2L7.6 4.2Z" fill="#B4B8C0"/></svg>
<div class="a" style="left:117.9px;top:272.2px;width:46.9px;height:14.8px;background:linear-gradient(#F2F6FB 0%,#E4ECF7 45%,#CAD9F0 58%,#D2DFF3 100%);border:1px solid #8D98AC;border-radius:2px"></div>
<div class="t" style="left:124.2px;top:276.93px;font-size:6.7px;color:#2A3448;letter-spacing:-0.076px;">Verlau<u>f</u> (F3)</div>
<div class="a" style="left:166.8px;top:272.2px;width:45.9px;height:14.8px;background:linear-gradient(#F2F6FB 0%,#E4ECF7 45%,#CAD9F0 58%,#D2DFF3 100%);border:1px solid #8D98AC;border-radius:2px"></div>
<div class="t" style="left:174.6px;top:276.93px;font-size:6.7px;color:#2A3448;letter-spacing:-0.212px;">S<u>p</u>am (F9)</div>
<div class="a" style="left:214.8px;top:272.2px;width:55.09999999999999px;height:14.8px;background:linear-gradient(#F2F6FB 0%,#E4ECF7 45%,#CAD9F0 58%,#D2DFF3 100%);border:1px solid #8D98AC;border-radius:2px"></div>
<div class="t" style="left:221.6px;top:276.93px;font-size:6.7px;color:#2A3448;letter-spacing:-0.131px;"><u>L</u>öschen (Entf)</div>
<div class="a" style="left:271.5px;top:272.2px;width:44.00000000000002px;height:14.8px;background:linear-gradient(#F2F6FB 0%,#E4ECF7 45%,#CAD9F0 58%,#D2DFF3 100%);border:1px solid #8D98AC;border-radius:2px"></div>
<div class="t" style="left:277.2px;top:276.93px;font-size:6.7px;color:#2A3448;letter-spacing:-0.060px;">Ar<u>c</u>hiv (F7)</div>
<div class="a" style="left:317.7px;top:272.2px;width:51.80000000000003px;height:14.8px;background:linear-gradient(#F2F6FB 0%,#E4ECF7 45%,#CAD9F0 58%,#D2DFF3 100%);border:1px solid #8D98AC;border-radius:2px"></div>
<div class="t" style="left:323.4px;top:276.93px;font-size:6.7px;color:#2A3448;letter-spacing:-0.055px;"><u>E</u>rledigt (F11)</div>
<div class="a" style="left:371.4px;top:272.2px;width:46.30000000000003px;height:14.8px;background:linear-gradient(#F2F6FB 0%,#E4ECF7 45%,#CAD9F0 58%,#D2DFF3 100%);border:1px solid #8D98AC;border-radius:2px"></div>
<div class="t" style="left:377.2px;top:276.93px;font-size:6.7px;color:#2A3448;letter-spacing:0.022px;"><u>O</u>ffen (F12)</div>
<div class="a" style="left:420.2px;top:272.2px;width:30.70000000000001px;height:14.8px;background:linear-gradient(#F2F6FB 0%,#E4ECF7 45%,#CAD9F0 58%,#D2DFF3 100%);border:1px solid #8D98AC;border-radius:2px"></div>
<div class="t" style="left:426px;top:276.93px;font-size:6.7px;color:#2A3448;letter-spacing:-0.276px;"><u>Z</u>usatz</div>
<div class="a" style="left:111.6px;top:301px;width:32px;height:12.5px;background:#FBFAF7;border:1px solid #C5CCD6;border-bottom:none"></div>
<div class="t" style="left:117.7px;top:304.53px;font-size:6.7px;color:#2A2A2A;letter-spacing:-0.091px;">1 Inhalt</div>
<div class="a" style="left:111.6px;top:313.0px;width:526px;height:217.3px;background:#F8F6F1;border:1px solid #CDD2D8;box-shadow:inset 1px 1px 0 #fff"></div>
<div class="a" style="left:112.6px;top:312.8px;width:30.5px;height:1.4px;background:#F8F6F1;"></div>
<div class="a" style="left:113.3px;top:318.3px;width:522.2px;height:33.8px;background:#F7F6F2;border:1px solid #A2B4CE"></div>
<div class="a" style="left:114.3px;top:319.3px;width:34px;height:31.8px;background:#DDE8F7;"></div>
<div class="a" style="left:114.3px;top:329.9px;width:520px;height:0.8px;background:#E6E8EC;"></div>
<div class="a" style="left:114.3px;top:340.2px;width:520px;height:0.8px;background:#E6E8EC;"></div>
<div class="t" style="left:117.4px;top:322.03px;font-size:6.7px;color:#3A3A3A;letter-spacing:-0.197px;">Von:</div>
<div class="t" style="left:152.6px;top:322.03px;font-size:6.7px;color:#2A2A2A;letter-spacing:-0.017px;">Mitarbeiter 2 [002]</div>
<div class="t" style="left:117.4px;top:332.33px;font-size:6.7px;color:#3A3A3A;">An:</div>
<div class="t" style="left:152.6px;top:332.33px;font-size:6.7px;color:#2A2A2A;letter-spacing:-0.014px;">Systemverwalter [000]</div>
<div class="t" style="left:117.4px;top:342.63px;font-size:6.7px;color:#3A3A3A;letter-spacing:0.295px;">Betreff:</div>
<div class="t" style="left:152.6px;top:342.63px;font-size:6.7px;color:#2A2A2A;letter-spacing:-0.093px;">AW: Termin [ID:LDhd42C]</div>
<div class="a" style="left:112.1px;top:353.8px;width:524.8px;height:174.2px;background:#FFFFFF;border:1px solid #B4B8BE"></div>
<div class="a" style="left:625.5px;top:355px;width:10px;height:172.5px;background:#F0F0F0;border-left:1px solid #E0E0E0"></div>
<svg class="a" style="left:627.5px;top:359.5px;" width="6" height="5" viewBox="0 0 6 5"><path d="M3 1L5 3.6L1 3.6Z" fill="#404040"/></svg>
<div class="a" style="left:626.5px;top:368.2px;width:8px;height:113px;background:linear-gradient(90deg,#F4F4F4,#E0E0E0);border:1px solid #C4C4C4;border-radius:1px"></div>
<div class="a" style="left:628.5px;top:422px;width:4px;height:0.7px;background:#909090;"></div>
<div class="a" style="left:628.5px;top:424px;width:4px;height:0.7px;background:#909090;"></div>
<div class="a" style="left:628.5px;top:426px;width:4px;height:0.7px;background:#909090;"></div>
<svg class="a" style="left:627.5px;top:520px;" width="6" height="5" viewBox="0 0 6 5"><path d="M1 1L5 1L3 3.6Z" fill="#404040"/></svg>
<div class="t" style="left:120.2px;top:367.61px;font-size:7.9px;color:#111;font-family:'Liberation Serif',serif;letter-spacing:-0.263px;">Hallo,</div>
<div class="t" style="left:120.2px;top:385.11px;font-size:7.9px;color:#111;font-family:'Liberation Serif',serif;letter-spacing:0.006px;">dieser Termin geht in Ordnung.</div>
<div class="t" style="left:120.2px;top:404.11px;font-size:7.9px;color:#111;font-family:'Liberation Serif',serif;letter-spacing:-0.073px;">Gruß</div>
<div class="t" style="left:120.2px;top:508.61px;font-size:7.9px;color:#111;font-family:'Liberation Serif',serif;letter-spacing:-0.263px;">Hallo,</div>
<div class="a" style="left:120.3px;top:431.8px;width:493.6px;height:57.4px;background:#FFFFFF;border:1px solid #DADDE2"></div>
<div class="a" style="left:120.3px;top:431.8px;width:493.6px;height:12.8px;background:#C9DAEE;"></div>
<div class="t" style="left:123.4px;top:436.16px;font-size:6.9px;font-weight:bold;color:#1A2230;letter-spacing:0.244px;">Ursprüngliche Nachricht</div>
<div class="t" style="left:565.6px;top:435.82px;font-size:7.3px;font-weight:bold;color:#8A929C;letter-spacing:0.213px;">BüroWARE®</div>
<div class="a" style="left:121.3px;top:444.6px;width:42.6px;height:11.0px;background:#F1F1F1;"></div>
<div class="t" style="left:124.1px;top:446.83px;font-size:6.7px;color:#3A3A3A;">Von:</div>
<div class="t" style="left:167.1px;top:446.83px;font-size:6.7px;color:#3A6CC8;letter-spacing:-0.077px;">Systemverwalter [000] [benutzer1@meine-firma-homepage.de]</div>
<div class="a" style="left:167.1px;top:453.2px;width:182.4px;height:0.5px;background:#6A90D8;"></div>
<div class="a" style="left:121.3px;top:455.6px;width:42.6px;height:11.0px;background:#F1F1F1;"></div>
<div class="a" style="left:121.3px;top:455.6px;width:491.6px;height:0.8px;background:#E6E6E6;"></div>
<div class="t" style="left:124.1px;top:457.93px;font-size:6.7px;color:#3A3A3A;">An:</div>
<div class="t" style="left:167.1px;top:457.93px;font-size:6.7px;color:#2A2A2A;letter-spacing:-0.286px;">002</div>
<div class="a" style="left:121.3px;top:466.6px;width:42.6px;height:11.0px;background:#F1F1F1;"></div>
<div class="a" style="left:121.3px;top:466.6px;width:491.6px;height:0.8px;background:#E6E6E6;"></div>
<div class="t" style="left:124.1px;top:469.13px;font-size:6.7px;color:#3A3A3A;letter-spacing:-0.220px;">Gesendet:</div>
<div class="t" style="left:167.1px;top:469.13px;font-size:6.7px;color:#2A2A2A;letter-spacing:-0.055px;">Wed, 22 Feb 2012 16:29:26 +0100</div>
<div class="a" style="left:121.3px;top:477.6px;width:42.6px;height:11.0px;background:#F1F1F1;"></div>
<div class="a" style="left:121.3px;top:477.6px;width:491.6px;height:0.8px;background:#E6E6E6;"></div>
<div class="t" style="left:124.1px;top:479.73px;font-size:6.7px;color:#3A3A3A;letter-spacing:0.195px;">Betreff:</div>
<div class="t" style="left:167.1px;top:479.73px;font-size:6.7px;color:#2A2A2A;letter-spacing:-0.175px;">Termin [ID:LDhd42C]</div>
</div></body></html>
